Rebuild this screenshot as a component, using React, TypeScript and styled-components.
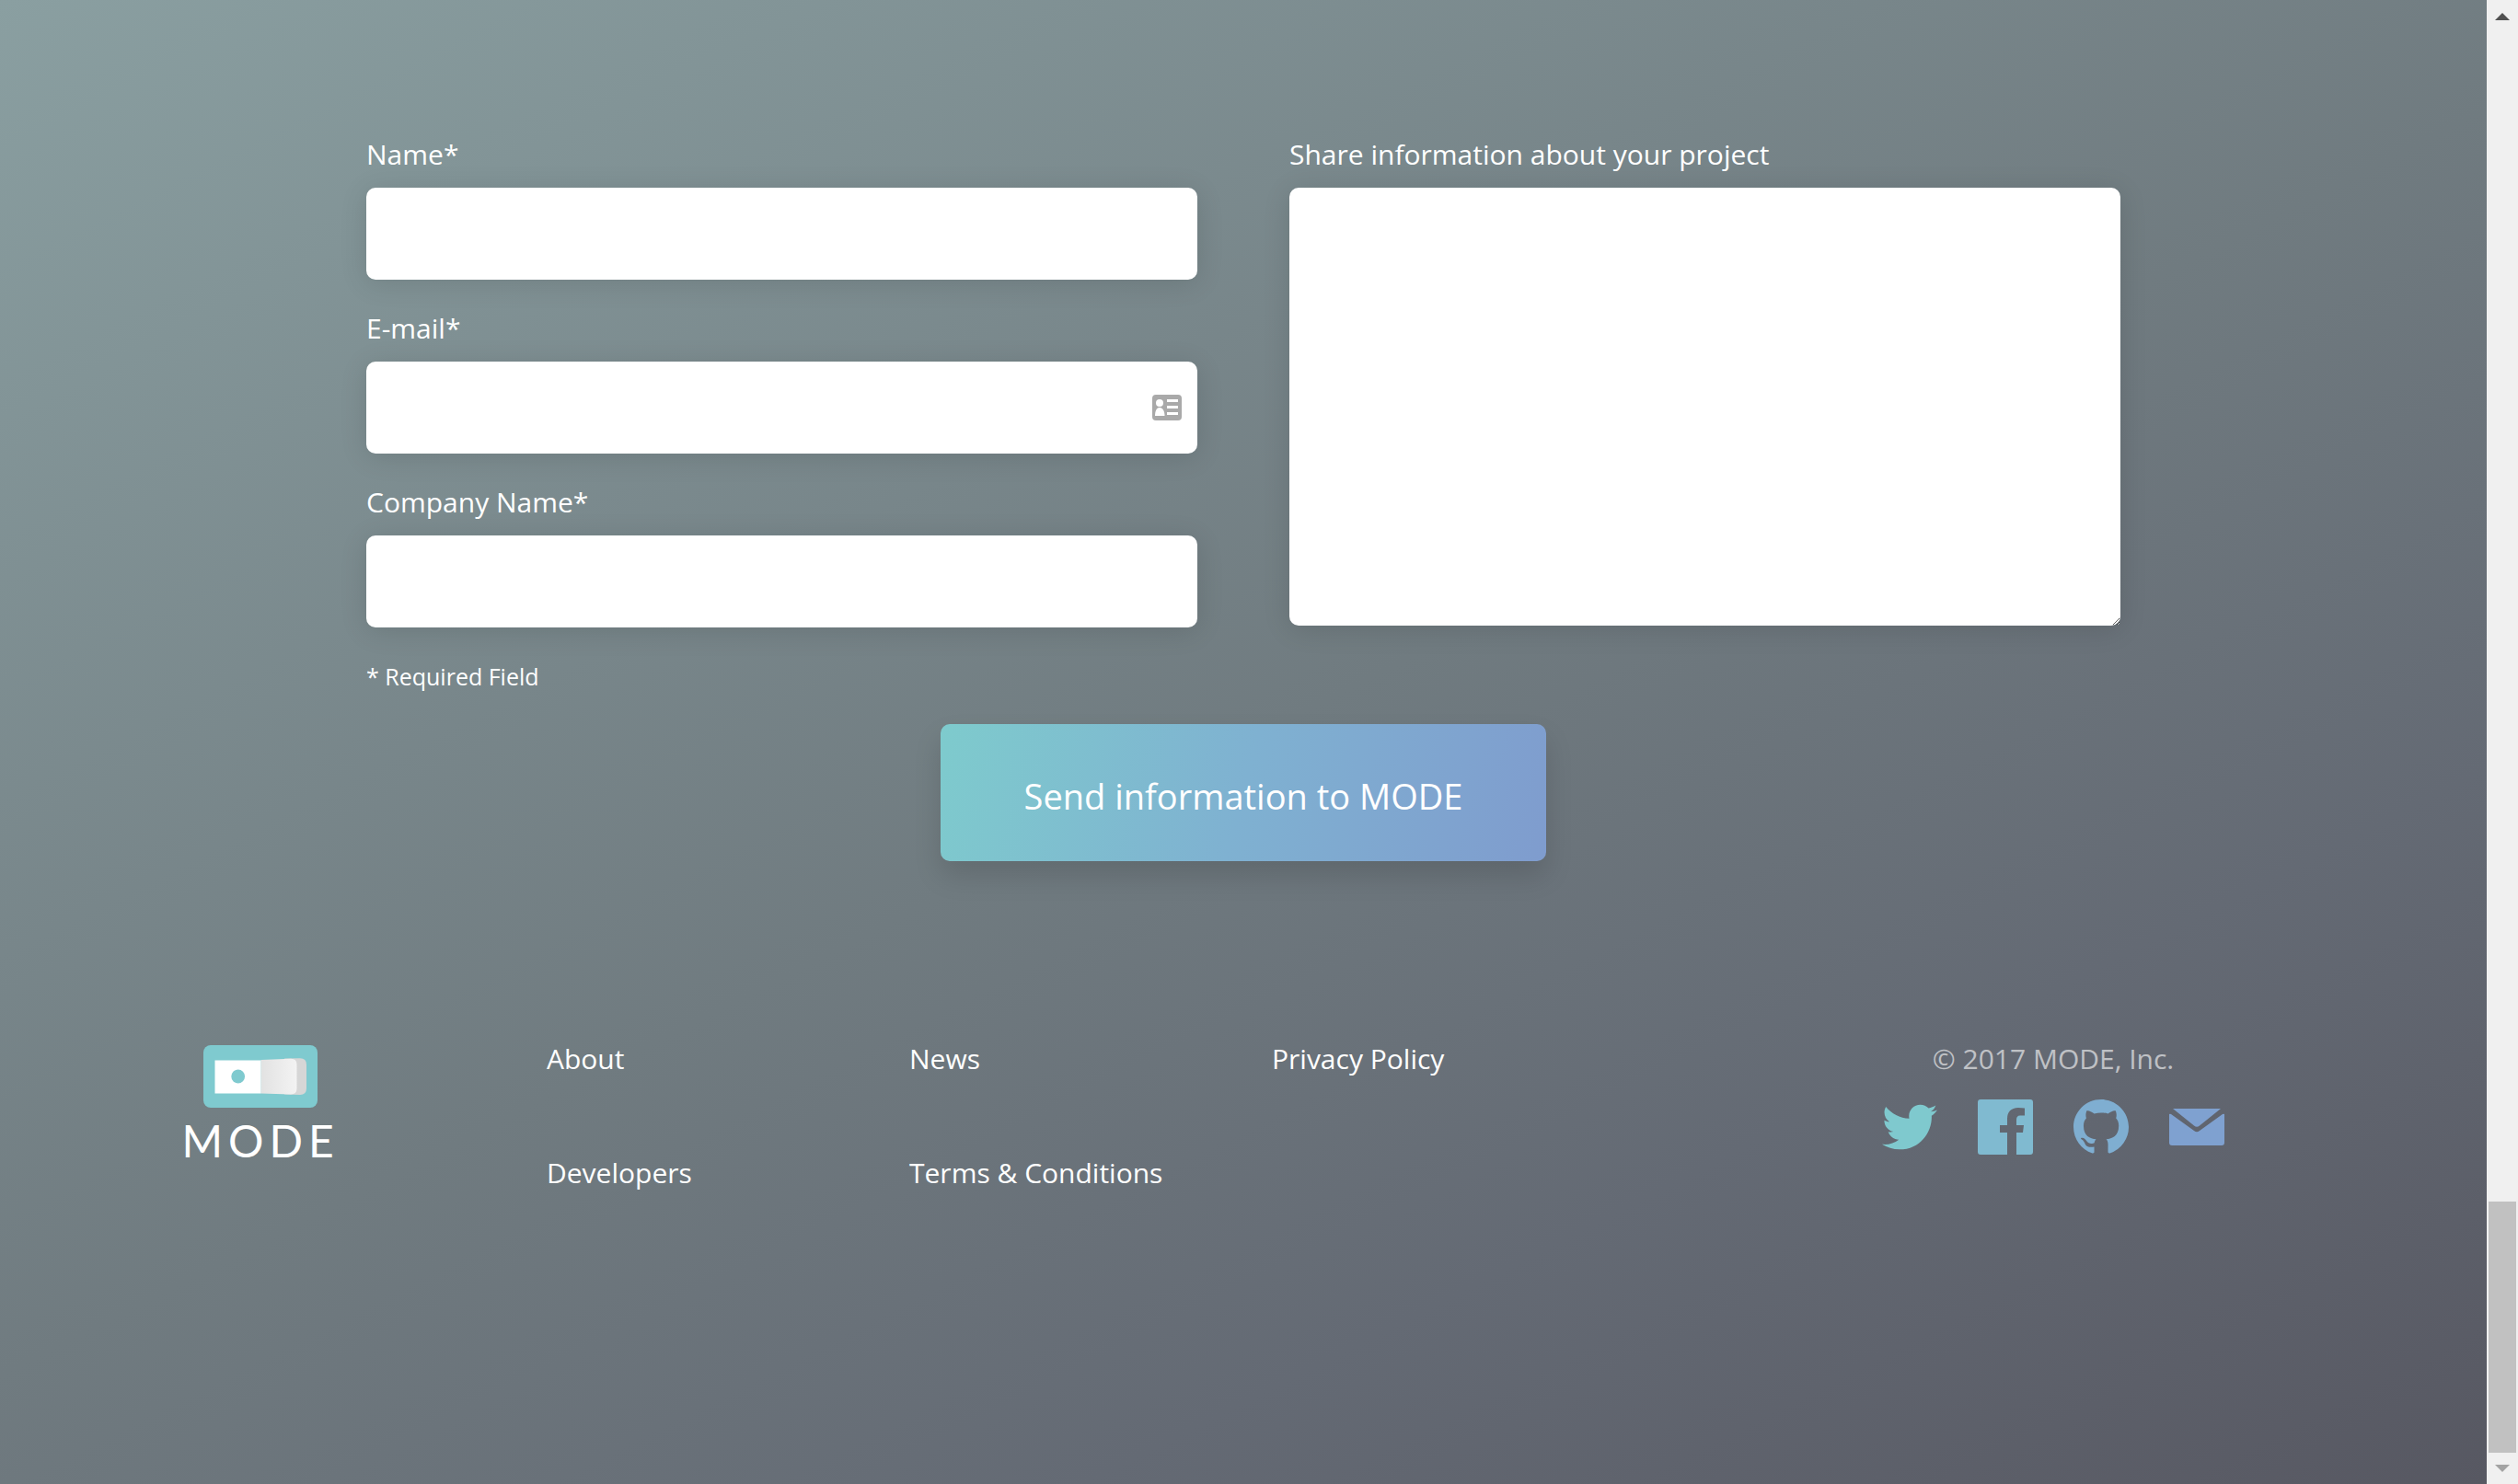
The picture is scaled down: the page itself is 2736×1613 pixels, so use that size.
import React from "react";
import styled, { createGlobalStyle } from "styled-components";
import { FaTwitter } from "react-icons/fa";

const GlobalStyle = createGlobalStyle`
  *, *::before, *::after { box-sizing: border-box; }
  body {
    margin: 0;
    font-family: "Open Sans", "Noto Sans", sans-serif;
    font-size: 30px;
    line-height: 40px;
    color: #fff;
  }
`;

const Page = styled.div`
  display: grid;
  grid-template-columns: 1fr 34px;
  min-height: 100vh;
`;

const Content = styled.div`
  display: flex;
  flex-direction: column;
  background: linear-gradient(153deg, #8a9fa1 0%, #707b80 50%, #646a74 74%, #575862 100%);
`;

const Form = styled.form`
  width: 1906px;
  max-width: calc(100% - 80px);
  margin: 0 auto;
  padding-top: 148px;
  display: flex;
  flex-direction: column;
`;

const Columns = styled.div`
  display: grid;
  grid-template-columns: 1fr 1fr;
  column-gap: 100px;
`;

const Field = styled.div`
  display: flex;
  flex-direction: column;
  gap: 16px;
  margin-bottom: 33px;
`;

const InputWrap = styled.div`
  position: relative;
  display: flex;
`;

const Input = styled.input`
  flex: 1;
  height: 100px;
  padding: 0 24px;
  border: 0;
  border-radius: 10px;
  background: #fff;
  box-shadow: 0 4px 30px rgba(0, 0, 0, 0.12);
  font: inherit;
  color: #333;
`;

const TextArea = styled.textarea`
  height: 476px;
  padding: 24px;
  border: 0;
  border-radius: 10px;
  background: #fff;
  box-shadow: 0 4px 30px rgba(0, 0, 0, 0.12);
  font: inherit;
  color: #333;
  resize: both;
`;

const ContactBadge = styled.svg`
  position: absolute;
  right: 17px;
  top: 36px;
  width: 32px;
  height: 28px;
`;

const Note = styled.p`
  margin: 0;
  font-size: 25px;
`;

const Submit = styled.button`
  align-self: center;
  min-width: 658px;
  margin-top: 32px;
  padding: 50px 80px 43px;
  border: 0;
  border-radius: 10px;
  background: linear-gradient(105deg, #7ecbcd, #7fb1d1 50%, #7f9cce);
  box-shadow: 0 16px 30px rgba(0, 0, 0, 0.13);
  font: inherit;
  font-size: 38px;
  line-height: 56px;
  color: #fff;
`;

const Footer = styled.footer`
  display: grid;
  grid-template-columns: 392px 1fr auto;
  padding: 195px 285px 80px 202px;
`;

const Logo = styled.a`
  justify-self: start;
  align-self: start;
  display: flex;
  flex-direction: column;
  align-items: center;
  gap: 12px;
  width: 162px;
  padding-top: 5px;
  color: #fff;
  text-decoration: none;
`;

const Switch = styled.svg`
  width: 124px;
  height: 68px;
`;

const Wordmark = styled.span`
  font-family: Lato, sans-serif;
  font-size: 48px;
  line-height: 48px;
  letter-spacing: 6px;
`;

const Links = styled.nav`
  display: grid;
  grid-template-columns: repeat(3, 394px);
  grid-auto-rows: 40px;
  row-gap: 84px;
`;

const Link = styled.a`
  color: #fff;
  text-decoration: none;
`;

const Social = styled.div`
  display: flex;
  flex-direction: column;
  align-items: center;
  gap: 24px;
`;

const Copyright = styled.span`
  color: rgba(255, 255, 255, 0.6);
`;

const IconRow = styled.div`
  display: flex;
  gap: 44px;
`;

const IconLink = styled.a<{ $color: string }>`
  display: grid;
  place-items: center;
  width: 60px;
  height: 60px;
  color: ${(p) => p.$color};
`;

const Scrollbar = styled.div`
  display: flex;
  flex-direction: column;
  align-items: center;
  height: 100vh;
  background: #f0f0f0;
`;

const Track = styled.div`
  flex: 1;
  display: flex;
  align-items: flex-end;
`;

const Thumb = styled.div`
  width: 30px;
  height: 273px;
  background: #c1c1c1;
`;

const ArrowBox = styled.svg`
  width: 34px;
  height: 34px;
`;

const GITHUB =
  "M8 0C3.58 0 0 3.58 0 8c0 3.54 2.29 6.53 5.47 7.59.4.07.55-.17.55-.38 0-.19-.01-.82-.01-1.49-2.01.37-2.53-.49-2.69-.94-.09-.23-.48-.94-.82-1.13-.28-.15-.68-.52-.01-.53.63-.01 1.08.58 1.23.82.72 1.21 1.87.87 2.33.66.07-.52.28-.87.51-1.07-1.78-.2-3.64-.89-3.64-3.95 0-.87.31-1.59.82-2.15-.08-.2-.36-1.02.08-2.12 0 0 .67-.21 2.2.82.64-.18 1.32-.27 2-.27.68 0 1.36.09 2 .27 1.53-1.04 2.2-.82 2.2-.82.44 1.1.16 1.92.08 2.12.51.56.82 1.27.82 2.15 0 3.07-1.87 3.75-3.65 3.95.29.25.54.73.54 1.48 0 1.07-.01 1.93-.01 2.2 0 .21.15.46.55.38A8.013 8.013 0 0016 8c0-4.42-3.58-8-8-8z";

const LINKS = ["About", "News", "Privacy Policy", "Developers", "Terms & Conditions"];

export default function App() {
  return (
    <>
      <GlobalStyle />
      <Page>
        <Content>
          <Form onSubmit={(e) => e.preventDefault()}>
            <Columns>
              <div>
                <Field>
                  <label htmlFor="name">Name*</label>
                  <InputWrap>
                    <Input id="name" type="text" />
                  </InputWrap>
                </Field>
                <Field>
                  <label htmlFor="email">E-mail*</label>
                  <InputWrap>
                    <Input id="email" type="email" />
                    <ContactBadge viewBox="0 0 32 28" aria-hidden="true">
                      <rect width="32" height="28" rx="4" fill="#a9a9a9" />
                      <circle cx="8" cy="9" r="4" fill="#fff" />
                      <path d="M3 23c0-5 1.500-9 5-9s5.500 4 5.500 9z" fill="#fff" />
                      <path d="M16 5h12v3H16zM16 12h12v3H16zM16 19h12v3H16z" fill="#fff" />
                    </ContactBadge>
                  </InputWrap>
                </Field>
                <Field>
                  <label htmlFor="company">Company Name*</label>
                  <InputWrap>
                    <Input id="company" type="text" />
                  </InputWrap>
                </Field>
              </div>
              <Field>
                <label htmlFor="project">Share information about your project</label>
                <TextArea id="project" />
              </Field>
            </Columns>
            <Note>* Required Field</Note>
            <Submit type="submit">Send information to MODE</Submit>
          </Form>

          <Footer>
            <Logo href="#">
              <Switch viewBox="0 0 124 68" aria-hidden="true">
                <defs>
                  <linearGradient id="flap">
                    <stop offset="0" stopColor="#e2e2e2" />
                    <stop offset="1" stopColor="#f3f3f3" />
                  </linearGradient>
                </defs>
                <rect width="124" height="68" rx="8" fill="#7fcacf" />
                <path d="M88 14.500 L105 14.200 Q112 14.200 112 21 V47 Q112 54 105 54 L88 53.500z" fill="#d6d6d6" />
                <path d="M62.500 16 L95 14.700 Q101.500 14.700 101.500 21 V47 Q101.500 53.500 95 53.500 L62.500 52.500z" fill="url(#flap)" />
                <path d="M12.500 16.500h50v36h-50z" fill="#fff" />
                <circle cx="37.700" cy="34" r="7.400" fill="#7fcacf" />
              </Switch>
              <Wordmark>MODE</Wordmark>
            </Logo>
            <Links>
              {LINKS.map((label) => (
                <div key={label}>
                  <Link href="#">{label}</Link>
                </div>
              ))}
            </Links>
            <Social>
              <Copyright>© 2017 MODE, Inc.</Copyright>
              <IconRow>
                <IconLink href="#" aria-label="Twitter" $color="#7fc9ce">
                  <FaTwitter size={60} />
                </IconLink>
                <IconLink href="#" aria-label="Facebook" $color="#80bad0">
                  <svg width="60" height="60" viewBox="0 0 60 60" fill="currentColor">
                    <path d="M3 0H57Q60 0 60 3V57Q60 60 57 60H42V36H49L50 28H42V22Q42 17.500 46 17.500H51V9.500Q48 9 44 9Q32 9.500 32 21V28H24V36H32V60H3Q0 60 0 57V3Q0 0 3 0z" />
                  </svg>
                </IconLink>
                <IconLink href="#" aria-label="GitHub" $color="#7faed1">
                  <svg width="60" height="60" viewBox="0 0 16 16" fill="currentColor">
                    <path d={GITHUB} />
                  </svg>
                </IconLink>
                <IconLink href="#" aria-label="E-mail" $color="#7fa1d0">
                  <svg width="60" height="40" viewBox="0 0 60 40" fill="currentColor">
                    <path d="M4 0H56L33 18.500Q30 21 27 18.500z" />
                    <path d="M0 6Q1 5.500 2 6L27 24Q30 26.500 33 24L58 6Q59 5.500 60 6V37Q60 40 57 40H3Q0 40 0 37z" />
                  </svg>
                </IconLink>
              </IconRow>
            </Social>
          </Footer>
        </Content>
        <Scrollbar aria-hidden="true">
          <ArrowBox viewBox="0 0 34 34">
            <path d="M17 14L25 22H9z" fill="#505050" />
          </ArrowBox>
          <Track>
            <Thumb />
          </Track>
          <ArrowBox viewBox="0 0 34 34">
            <path d="M9 13H25L17 21z" fill="#a3a3a3" />
          </ArrowBox>
        </Scrollbar>
      </Page>
    </>
  );
}
